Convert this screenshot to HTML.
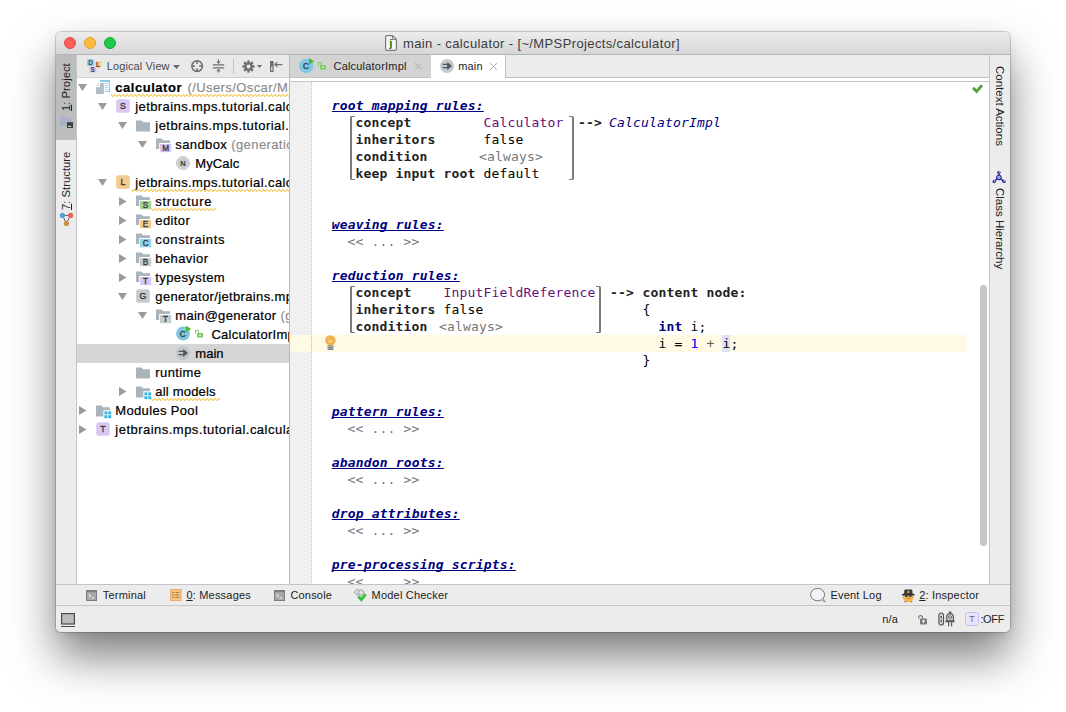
<!DOCTYPE html>
<html>
<head>
<meta charset="utf-8">
<title>main - calculator - [~/MPSProjects/calculator]</title>
<style>
html,body{margin:0;padding:0;}
body{width:1066px;height:712px;background:#fff;position:relative;overflow:hidden;font-family:"Liberation Sans",sans-serif;color:#1a1a1a;}
.abs{position:absolute;}
svg{display:block;overflow:visible;}
#win{position:absolute;left:56px;top:32px;width:954px;height:600px;border-radius:5px;background:#ececec;
 box-shadow:0 0 0 1px rgba(0,0,0,0.17),0 25px 45px rgba(0,0,0,0.5),0 3px 10px rgba(0,0,0,0.08);}
#clip{position:absolute;left:0;top:0;width:954px;height:600px;border-radius:5px;overflow:hidden;}
#title{position:absolute;left:0;top:0;width:954px;height:22px;background:linear-gradient(#ececec,#d6d6d6);border-bottom:1px solid #b5b5b5;box-sizing:content-box;}
.tl{position:absolute;top:5px;width:12px;height:12px;border-radius:50%;box-sizing:border-box;}
#ttext{position:absolute;left:347px;top:4px;font-size:13px;letter-spacing:0.375px;line-height:15px;color:#3c3c3c;white-space:nowrap;}
/* side strips */
#lstrip{position:absolute;left:0;top:23px;width:20px;height:529px;background:#ececec;border-right:1px solid #c4c4c4;}
#lactive{position:absolute;left:0;top:0;width:20px;height:85px;background:#bdbdbd;}
#rstrip{position:absolute;left:933px;top:23px;width:21px;height:529px;background:#ececec;border-left:1px solid #c4c4c4;box-sizing:border-box;}
.vtxt{position:absolute;white-space:nowrap;color:#222;}
.vl{font-size:11.3px;letter-spacing:0;line-height:12px;transform:rotate(-90deg);transform-origin:0 0;}
.vr{font-size:11.5px;line-height:12px;transform:rotate(90deg);transform-origin:0 0;}
u{text-decoration:underline;text-underline-offset:1px;}
/* project panel */
#phead{position:absolute;left:21px;top:23px;width:212px;height:23px;background:#e9e9e9;border-bottom:1px solid #d0d0d0;box-sizing:border-box;}
#tree{position:absolute;left:21px;top:46px;width:212px;height:506px;background:#fff;overflow:hidden;}
.row{position:absolute;left:0;width:212px;height:19px;}
.row .t{position:absolute;top:1px;font-size:13px;letter-spacing:0.4px;line-height:17px;white-space:nowrap;color:#000;-webkit-text-stroke:0.22px #000;}
.row .g{color:#8a8a8a;-webkit-text-stroke:0.15px #8a8a8a;}
.row .bd{font-weight:bold;letter-spacing:0.53px;margin-right:1.5px;}
.row .n1{letter-spacing:0.29px;}
#pdiv{position:absolute;left:233px;top:23px;width:1px;height:529px;background:#b9b9b9;}
/* editor */
#tabs{position:absolute;left:234px;top:23px;width:699px;height:23px;background:#ececec;border-bottom:1px solid #c2c2c2;box-sizing:border-box;}
#tab1{position:absolute;left:0;top:0;width:141px;height:23px;background:#d3d3d3;border-bottom:1px solid #c2c2c2;box-sizing:border-box;}
#tab2{position:absolute;left:141px;top:0;width:74px;height:24px;background:#fff;border-right:1px solid #bdbdbd;}
#tabwhite{position:absolute;left:234px;top:46px;width:699px;height:3px;background:#fff;border-bottom:1px solid #c6c6c6;}
.tabt{position:absolute;top:5px;font-size:11px;letter-spacing:0.2px;line-height:13px;color:#222;white-space:nowrap;}
.x{position:absolute;top:8px;}
#editor{position:absolute;left:234px;top:50px;width:699px;height:502px;background:#fff;overflow:hidden;}
#gutter{position:absolute;left:0;top:0;width:21px;height:503px;background:#f0f0f0;}
#gline{position:absolute;left:21px;top:0;width:0;height:503px;border-right:1px dotted #bcbcbc;}
#hl{position:absolute;left:0;top:253px;width:677px;height:17px;background:#fffae3;}
#thumb{position:absolute;left:690px;top:203px;width:7px;height:261px;border-radius:3.5px;background:#c7c7c7;}
.c{position:absolute;font-family:"DejaVu Sans Mono","Liberation Mono",monospace;font-size:13px;letter-spacing:0.174px;line-height:17px;white-space:pre;color:#000;}
.h{font-weight:bold;font-style:italic;color:#000080;text-decoration:underline;text-underline-offset:1.2px;text-decoration-thickness:1.4px;text-decoration-skip-ink:none;}
.b{font-weight:bold;}
.k{color:#222;}
.kw{font-weight:bold;color:#000080;}
.p{color:#660e7a;}
.gr{color:#787878;}
.pl{color:#5e5e4e;}
.bl{color:#0000ff;}
.ci{font-style:italic;color:#000080;}
/* bottom */
#btools{position:absolute;left:0;top:552px;width:954px;height:20px;background:#ececec;border-top:1px solid #c4c4c4;box-sizing:content-box;}
#status{position:absolute;left:0;top:573px;width:954px;height:27px;background:#ececec;border-top:1px solid #c4c4c4;box-sizing:border-box;}
.bt{position:absolute;top:4px;font-size:11px;letter-spacing:0.2px;line-height:13px;color:#222;white-space:nowrap;}
</style>
</head>
<body>
<div id="win"><div id="clip">
  <div id="title">
    <div class="tl" style="left:8px;background:#fc605b;border:0.5px solid #de4b46;"></div>
    <div class="tl" style="left:28px;background:#fdbc40;border:0.5px solid #dea034;"></div>
    <div class="tl" style="left:48px;background:#1fc94c;border:0.5px solid #14ab3a;"></div>
    <svg class="abs" style="left:329px;top:2.9px" width="12" height="16" viewBox="0 0 12 16"><path d="M0.6 1.8Q0.6 0.6 1.8 0.6H7.4L11.4 4.6V14.2Q11.4 15.4 10.2 15.4H1.8Q0.6 15.4 0.6 14.2Z" fill="#fbfbfb" stroke="#787878" stroke-width="1.2"/><path d="M7.4 0.6V4.6H11.4" fill="none" stroke="#787878" stroke-width="1"/><path d="M2.4 3.4H6M2.4 5.6H5M2.4 7.8H4.4" stroke="#dcdcdc" stroke-width="0.8"/><text x="5.9" y="12.3" text-anchor="middle" font-family="Liberation Sans, sans-serif" font-size="11.5" font-weight="bold" fill="#0a7a0a">j</text></svg>
    <div id="ttext">main - calculator - [~/MPSProjects/calculator]</div>
  </div>
  <div id="lstrip">
    <div id="lactive"></div>
    <div class="vtxt vl" style="left:4.4px;top:56px"><u>1</u>: Project</div>
    <svg class="abs" style="left:4px;top:61px" width="14" height="12" viewBox="0 0 14 12"><path d="M0 0H5.4L7 2.2H12V10H0Z" fill="#a9b3c6"/><rect x="7" y="6.2" width="6" height="5.8" fill="#3c3c3c"/><rect x="8.2" y="9.8" width="3" height="1" fill="#fff"/></svg>
    <div class="vtxt vl" style="left:4.4px;top:154.5px"><u>7</u>: Structure</div>
    <svg class="abs" style="left:3px;top:157px" width="15" height="15" viewBox="0 0 15 15"><path d="M3.4 3.4H11.6L7.4 11.4Z" fill="none" stroke="#555" stroke-width="1"/><circle cx="3.4" cy="3.4" r="2.6" fill="#5b9fd8"/><circle cx="11.6" cy="3.4" r="2.6" fill="#e9605c"/><circle cx="7.4" cy="11.4" r="2.6" fill="#c98f45"/></svg>
  </div>
  <div id="rstrip">
    <div class="vtxt vr" style="left:15.6px;top:11px">Context Actions</div>
    <svg class="abs" style="left:2.4px;top:115px" width="14" height="14" viewBox="0 0 14 14"><path d="M6.9 2.5V7.5M6.9 7.5L2.2 11.4M6.9 7.5L12 11.4" stroke="#2a2a9c" stroke-width="1.5"/><circle cx="6.9" cy="2.5" r="1.7" fill="#2a2a9c"/><circle cx="7.2" cy="2.1" r="0.8" fill="#c4d4f0"/><circle cx="2.2" cy="11.4" r="1.7" fill="#2a2a9c"/><circle cx="2.5" cy="11" r="0.8" fill="#c4d4f0"/><circle cx="12" cy="11.4" r="1.7" fill="#2a2a9c"/><circle cx="12.3" cy="11" r="0.8" fill="#c4d4f0"/><circle cx="6.9" cy="7.5" r="2.8" fill="#2a2a9c"/><circle cx="6.9" cy="7.3" r="1.6" fill="#b4cce8"/><circle cx="6.9" cy="7.3" r="0.6" fill="#3a4ab0"/></svg>
    <div class="vtxt vr" style="left:15.6px;top:133px">Class Hierarchy</div>
  </div>
  <div id="phead">
    <svg class="abs" style="left:10px;top:4px" width="15" height="15" viewBox="0 0 15 15">
      <rect x="0" y="0.2" width="7" height="7" fill="#8fd3ec"/><rect x="8.2" y="2.3" width="5.8" height="6.5" fill="#f5ca8e"/><rect x="2.2" y="7.7" width="7" height="6" fill="#d8c8f6"/>
      <text x="3.5" y="6" text-anchor="middle" font-family="Liberation Sans, sans-serif" font-size="6.5" font-weight="bold" fill="#3b4a55">D</text>
      <text x="11.1" y="8" text-anchor="middle" font-family="Liberation Sans, sans-serif" font-size="6.5" font-weight="bold" fill="#3b3b3b">L</text>
      <text x="5.7" y="13.2" text-anchor="middle" font-family="Liberation Sans, sans-serif" font-size="6.5" font-weight="bold" fill="#3b3b3b">S</text>
    </svg>
    <div class="abs" style="left:29.7px;top:5px;font-size:11px;letter-spacing:0.12px;line-height:13px;color:#4a4a4a;white-space:nowrap">Logical View</div>
    <svg class="abs" style="left:96.4px;top:9.7px" width="7" height="4" viewBox="0 0 7 4"><path d="M0 0H7L3.5 4Z" fill="#6a6a6a"/></svg>
    <svg class="abs" style="left:113px;top:4px" width="14" height="14" viewBox="0 0 14 14"><circle cx="7.1" cy="7.1" r="5.3" fill="none" stroke="#6e6e6e" stroke-width="1.5"/><path d="M7.1 1.8V5M7.1 9.2V12.4M1.8 7.1H5M9.2 7.1H12.4" stroke="#6e6e6e" stroke-width="1.5"/></svg>
    <svg class="abs" style="left:135px;top:4px" width="13" height="14" viewBox="0 0 13 14"><path d="M0.8 5.9H12.2M0.8 8.9H12.2" stroke="#6e6e6e" stroke-width="1.1"/><path d="M6.5 0.2V4.6M6.5 13.6V10.2" stroke="#6e6e6e" stroke-width="1"/><path d="M4.4 2.6L6.5 5L8.6 2.6ZM4.4 12.2L6.5 9.8L8.6 12.2Z" fill="#6e6e6e"/></svg>
    <div class="abs" style="left:156px;top:4px;width:1px;height:15px;background:#c2c2c2"></div>
    <svg class="abs" style="left:164.8px;top:5px" width="13" height="13" viewBox="-6.5 -6.5 13 13"><g fill="#6e6e6e"><circle r="4.3"/><rect x="-1.2" y="-6.1" width="2.4" height="12.2"/><rect x="-1.2" y="-6.1" width="2.4" height="12.2" transform="rotate(45)"/><rect x="-1.2" y="-6.1" width="2.4" height="12.2" transform="rotate(90)"/><rect x="-1.2" y="-6.1" width="2.4" height="12.2" transform="rotate(135)"/></g><circle r="1.9" fill="#e9e9e9"/></svg>
    <svg class="abs" style="left:179.5px;top:10px" width="5" height="3" viewBox="0 0 5 3"><path d="M0 0H5L2.5 3Z" fill="#6a6a6a"/></svg>
    <svg class="abs" style="left:192.6px;top:6px" width="13" height="11" viewBox="0 0 13 11"><rect x="0.6" y="0.6" width="2.4" height="9.8" fill="none" stroke="#6e6e6e" stroke-width="1.2"/><rect x="0.6" y="0.6" width="2.4" height="5" fill="#6e6e6e"/><path d="M5 3.6H12.4" stroke="#6e6e6e" stroke-width="1.1"/><path d="M7.4 1.2L4.8 3.6L7.4 6" fill="none" stroke="#6e6e6e" stroke-width="1.1"/></svg>
  </div>
  <div id="tree">
<div class="row" style="top:0px"><svg class="abs" style="left:0.9px;top:6.4px" width="9" height="7" viewBox="0 0 9 7"><path d="M0 0H9L4.5 7Z" fill="#9b9b9b"/></svg><svg class="abs" style="left:19px;top:2px" width="14" height="14" viewBox="0 0 14 14"><g fill="#7ecbe8"><rect x="3.9" y="0" width="10" height="1.9"/><rect x="12.8" y="0" width="1.1" height="11.9"/><rect x="9" y="11" width="4.9" height="0.9"/><rect x="9" y="3.1" width="2.9" height="0.8"/><rect x="9" y="5.1" width="2.9" height="0.8"/><rect x="9" y="7.1" width="2.9" height="0.8"/><rect x="9" y="9.1" width="2.9" height="0.8"/></g><path d="M4 3H7.9V13.9H0V7.3H4Z" fill="#b3bcc7"/><path d="M0.2 5.6L2.9 3V5.6Z" fill="#c6ccd3"/></svg><div class="t" style="left:38.3px"><span class="bd">calculator</span><span class="g"> (/Users/Oscar/MPSProjects</span></div><svg class="abs" style="left:34px;top:16.3px;overflow:hidden" width="180" height="3" viewBox="0 0 180 3"><polyline points="0,0.4 2,2.6 4,0.4 6,2.6 8,0.4 10,2.6 12,0.4 14,2.6 16,0.4 18,2.6 20,0.4 22,2.6 24,0.4 26,2.6 28,0.4 30,2.6 32,0.4 34,2.6 36,0.4 38,2.6 40,0.4 42,2.6 44,0.4 46,2.6 48,0.4 50,2.6 52,0.4 54,2.6 56,0.4 58,2.6 60,0.4 62,2.6 64,0.4 66,2.6 68,0.4 70,2.6 72,0.4 74,2.6 76,0.4 78,2.6 80,0.4 82,2.6 84,0.4 86,2.6 88,0.4 90,2.6 92,0.4 94,2.6 96,0.4 98,2.6 100,0.4 102,2.6 104,0.4 106,2.6 108,0.4 110,2.6 112,0.4 114,2.6 116,0.4 118,2.6 120,0.4 122,2.6 124,0.4 126,2.6 128,0.4 130,2.6 132,0.4 134,2.6 136,0.4 138,2.6 140,0.4 142,2.6 144,0.4 146,2.6 148,0.4 150,2.6 152,0.4 154,2.6 156,0.4 158,2.6 160,0.4 162,2.6 164,0.4 166,2.6 168,0.4 170,2.6 172,0.4 174,2.6 176,0.4 178,2.6 180,0.4 182,2.6" fill="none" stroke="#f2ae00" stroke-width="0.95"/></svg></div>
<div class="row" style="top:19px"><svg class="abs" style="left:20.9px;top:6.4px" width="9" height="7" viewBox="0 0 9 7"><path d="M0 0H9L4.5 7Z" fill="#9b9b9b"/></svg><svg class="abs" style="left:39.3px;top:2.4px" width="14" height="14" viewBox="0 0 14 14"><rect x="0.2" y="0.2" width="13.6" height="13.6" rx="2.6" fill="#d8c8f6"/><text x="7" y="10" text-anchor="middle" font-family="Liberation Sans, sans-serif" font-size="8.8" stroke="#3b3b3b" stroke-width="0.35" fill="#3b3b3b">S</text></svg><div class="t" style="left:58.3px">jetbrains.mps.tutorial.calculator.sandbox</div></div>
<div class="row" style="top:38px"><svg class="abs" style="left:40.9px;top:6.4px" width="9" height="7" viewBox="0 0 9 7"><path d="M0 0H9L4.5 7Z" fill="#9b9b9b"/></svg><svg class="abs" style="left:59.1px;top:3.6px" width="14" height="12" viewBox="0 0 14 12"><path d="M0 0.4H5.6L7 2.2H14V11.4H0Z" fill="#aab4bd"/></svg><div class="t" style="left:78.3px;letter-spacing:0.45px">jetbrains.mps.tutorial.calculator</div></div>
<div class="row" style="top:57px"><svg class="abs" style="left:60.9px;top:6.4px" width="9" height="7" viewBox="0 0 9 7"><path d="M0 0H9L4.5 7Z" fill="#9b9b9b"/></svg><svg class="abs" style="left:79px;top:3px" width="16" height="15" viewBox="0 0 16 15"><path d="M0 0.4H5.6L7 2.2H14V5H3.2V11H0Z" fill="#aab4bd"/><rect x="4" y="6" width="11.2" height="8.2" fill="#d8c8f6"/><text x="9.6" y="13.2" text-anchor="middle" font-family="Liberation Sans, sans-serif" font-size="8.2" stroke="#3b3b3b" stroke-width="0.35" fill="#3b3b3b">M</text></svg><div class="t" style="left:98.3px">sandbox<span class="g"> (generation required)</span></div></div>
<div class="row" style="top:76px"><svg class="abs" style="left:99.2px;top:2.4px" width="14" height="14" viewBox="0 0 14 14"><circle cx="7" cy="7" r="6.5" fill="#d9dde0" stroke="#b9c0c6" stroke-width="0.9"/><circle cx="7" cy="7" r="4.9" fill="#c6cbd0"/><text x="7" y="9.8" text-anchor="middle" font-family="Liberation Sans, sans-serif" font-size="7.5" font-weight="bold" fill="#3b3b3b">N</text></svg><div class="t" style="left:118.3px;letter-spacing:0.12px">MyCalc</div></div>
<div class="row" style="top:95px"><svg class="abs" style="left:20.9px;top:6.4px" width="9" height="7" viewBox="0 0 9 7"><path d="M0 0H9L4.5 7Z" fill="#9b9b9b"/></svg><svg class="abs" style="left:39.3px;top:2.4px" width="14" height="14" viewBox="0 0 14 14"><rect x="0.2" y="0.2" width="13.6" height="13.6" rx="2.6" fill="#f5ca8e"/><text x="7" y="10" text-anchor="middle" font-family="Liberation Sans, sans-serif" font-size="8.8" stroke="#3b3b3b" stroke-width="0.35" fill="#3b3b3b">L</text></svg><div class="t" style="left:58.3px">jetbrains.mps.tutorial.calculator</div><svg class="abs" style="left:54px;top:16.3px;overflow:hidden" width="160" height="3" viewBox="0 0 160 3"><polyline points="0,0.4 2,2.6 4,0.4 6,2.6 8,0.4 10,2.6 12,0.4 14,2.6 16,0.4 18,2.6 20,0.4 22,2.6 24,0.4 26,2.6 28,0.4 30,2.6 32,0.4 34,2.6 36,0.4 38,2.6 40,0.4 42,2.6 44,0.4 46,2.6 48,0.4 50,2.6 52,0.4 54,2.6 56,0.4 58,2.6 60,0.4 62,2.6 64,0.4 66,2.6 68,0.4 70,2.6 72,0.4 74,2.6 76,0.4 78,2.6 80,0.4 82,2.6 84,0.4 86,2.6 88,0.4 90,2.6 92,0.4 94,2.6 96,0.4 98,2.6 100,0.4 102,2.6 104,0.4 106,2.6 108,0.4 110,2.6 112,0.4 114,2.6 116,0.4 118,2.6 120,0.4 122,2.6 124,0.4 126,2.6 128,0.4 130,2.6 132,0.4 134,2.6 136,0.4 138,2.6 140,0.4 142,2.6 144,0.4 146,2.6 148,0.4 150,2.6 152,0.4 154,2.6 156,0.4 158,2.6 160,0.4 162,2.6" fill="none" stroke="#f2ae00" stroke-width="0.95"/></svg></div>
<div class="row" style="top:114px"><svg class="abs" style="left:41.9px;top:5px" width="8" height="9" viewBox="0 0 8 9"><path d="M0 0L7.5 4.5L0 9Z" fill="#9b9b9b"/></svg><svg class="abs" style="left:59.3px;top:3px" width="16" height="15" viewBox="0 0 16 15"><path d="M0 0.4H5.6L7 2.2H14V5H3.2V11H0Z" fill="#aab4bd"/><rect x="4" y="6" width="11.2" height="8.2" fill="#a3d397"/><text x="9.6" y="13.2" text-anchor="middle" font-family="Liberation Sans, sans-serif" font-size="8.2" stroke="#3b3b3b" stroke-width="0.35" fill="#3b3b3b">S</text></svg><div class="t" style="left:78.3px;letter-spacing:0.7px">structure</div><svg class="abs" style="left:74px;top:16.3px;overflow:hidden" width="65" height="3" viewBox="0 0 65 3"><polyline points="0,0.4 2,2.6 4,0.4 6,2.6 8,0.4 10,2.6 12,0.4 14,2.6 16,0.4 18,2.6 20,0.4 22,2.6 24,0.4 26,2.6 28,0.4 30,2.6 32,0.4 34,2.6 36,0.4 38,2.6 40,0.4 42,2.6 44,0.4 46,2.6 48,0.4 50,2.6 52,0.4 54,2.6 56,0.4 58,2.6 60,0.4 62,2.6 64,0.4 66,2.6" fill="none" stroke="#f2ae00" stroke-width="0.95"/></svg></div>
<div class="row" style="top:133px"><svg class="abs" style="left:41.9px;top:5px" width="8" height="9" viewBox="0 0 8 9"><path d="M0 0L7.5 4.5L0 9Z" fill="#9b9b9b"/></svg><svg class="abs" style="left:59.3px;top:3px" width="16" height="15" viewBox="0 0 16 15"><path d="M0 0.4H5.6L7 2.2H14V5H3.2V11H0Z" fill="#aab4bd"/><rect x="4" y="6" width="11.2" height="8.2" fill="#f5ca8e"/><text x="9.6" y="13.2" text-anchor="middle" font-family="Liberation Sans, sans-serif" font-size="8.2" stroke="#3b3b3b" stroke-width="0.35" fill="#3b3b3b">E</text></svg><div class="t" style="left:78.3px">editor</div></div>
<div class="row" style="top:152px"><svg class="abs" style="left:41.9px;top:5px" width="8" height="9" viewBox="0 0 8 9"><path d="M0 0L7.5 4.5L0 9Z" fill="#9b9b9b"/></svg><svg class="abs" style="left:59.3px;top:3px" width="16" height="15" viewBox="0 0 16 15"><path d="M0 0.4H5.6L7 2.2H14V5H3.2V11H0Z" fill="#aab4bd"/><rect x="4" y="6" width="11.2" height="8.2" fill="#8ed3ec"/><text x="9.6" y="13.2" text-anchor="middle" font-family="Liberation Sans, sans-serif" font-size="8.2" stroke="#3b3b3b" stroke-width="0.35" fill="#3b3b3b">C</text></svg><div class="t" style="left:78.3px;letter-spacing:0.63px">constraints</div></div>
<div class="row" style="top:171px"><svg class="abs" style="left:41.9px;top:5px" width="8" height="9" viewBox="0 0 8 9"><path d="M0 0L7.5 4.5L0 9Z" fill="#9b9b9b"/></svg><svg class="abs" style="left:59.3px;top:3px" width="16" height="15" viewBox="0 0 16 15"><path d="M0 0.4H5.6L7 2.2H14V5H3.2V11H0Z" fill="#aab4bd"/><rect x="4" y="6" width="11.2" height="8.2" fill="#c5cbd1"/><text x="9.6" y="13.2" text-anchor="middle" font-family="Liberation Sans, sans-serif" font-size="8.2" stroke="#3b3b3b" stroke-width="0.35" fill="#3b3b3b">B</text></svg><div class="t" style="left:78.3px">behavior</div></div>
<div class="row" style="top:190px"><svg class="abs" style="left:41.9px;top:5px" width="8" height="9" viewBox="0 0 8 9"><path d="M0 0L7.5 4.5L0 9Z" fill="#9b9b9b"/></svg><svg class="abs" style="left:59.3px;top:3px" width="16" height="15" viewBox="0 0 16 15"><path d="M0 0.4H5.6L7 2.2H14V5H3.2V11H0Z" fill="#aab4bd"/><rect x="4" y="6" width="11.2" height="8.2" fill="#d8c8f6"/><text x="9.6" y="13.2" text-anchor="middle" font-family="Liberation Sans, sans-serif" font-size="8.2" stroke="#3b3b3b" stroke-width="0.35" fill="#3b3b3b">T</text></svg><div class="t" style="left:78.3px">typesystem</div></div>
<div class="row" style="top:209px"><svg class="abs" style="left:40.9px;top:6.4px" width="9" height="7" viewBox="0 0 9 7"><path d="M0 0H9L4.5 7Z" fill="#9b9b9b"/></svg><svg class="abs" style="left:59.3px;top:2.4px" width="14" height="14" viewBox="0 0 14 14"><rect x="0.2" y="0.2" width="13.6" height="13.6" rx="2.6" fill="#c5cbd1"/><text x="7" y="10" text-anchor="middle" font-family="Liberation Sans, sans-serif" font-size="8.8" stroke="#3b3b3b" stroke-width="0.35" fill="#3b3b3b">G</text></svg><div class="t" style="left:78.3px;letter-spacing:0.36px">generator/jetbrains.mps.tutorial</div></div>
<div class="row" style="top:228px"><svg class="abs" style="left:60.9px;top:6.4px" width="9" height="7" viewBox="0 0 9 7"><path d="M0 0H9L4.5 7Z" fill="#9b9b9b"/></svg><svg class="abs" style="left:79px;top:3px" width="16" height="15" viewBox="0 0 16 15"><path d="M0 0.4H5.6L7 2.2H14V5H3.2V11H0Z" fill="#aab4bd"/><rect x="4" y="6" width="11.2" height="8.2" fill="#c5cbd1"/><text x="9.6" y="13.2" text-anchor="middle" font-family="Liberation Sans, sans-serif" font-size="8.2" stroke="#3b3b3b" stroke-width="0.35" fill="#3b3b3b">T</text></svg><div class="t" style="left:98.3px"><span class="n1">main@generator</span><span class="g"> (generation required)</span></div></div>
<div class="row" style="top:247px"><svg class="abs" style="left:99px;top:0.3px" width="16" height="16" viewBox="0 0 16 16"><circle cx="7" cy="8.6" r="7" fill="#7fc8e3"/><text x="6.8" y="11.5" text-anchor="middle" font-family="Liberation Sans, sans-serif" font-size="8.2" stroke="#3a4652" stroke-width="0.4" fill="#3a4652">C</text><path d="M9.8 0.6L15.2 3.9L9.8 7.4Z" fill="#4fb834"/></svg><svg class="abs" style="left:118px;top:4.9px" width="9" height="8" viewBox="0 0 9 8"><path d="M0.5 3.6V0.5H3.4V3" fill="none" stroke="#7ecb6a" stroke-width="1"/><rect x="2" y="3" width="6" height="4.6" fill="#7ecb6a"/><rect x="4.2" y="4.6" width="1.8" height="1.4" fill="#d8f0d0"/></svg><div class="t" style="left:134.4px;letter-spacing:0.26px">CalculatorImpl</div></div>
<div class="row" style="top:266px;background:#d5d5d5"><svg class="abs" style="left:99px;top:2.4px" width="14" height="14" viewBox="0 0 14 14"><circle cx="7" cy="7" r="7" fill="#bfc6cd"/><path d="M2.6 5.4H8M2.6 8.6H8" stroke="#555" stroke-width="1.2"/><path d="M7.2 3L12 7L7.2 11Z" fill="#555"/></svg><div class="t" style="left:118.3px;letter-spacing:0.03px">main</div></div>
<div class="row" style="top:285px"><svg class="abs" style="left:59.1px;top:3.6px" width="14" height="12" viewBox="0 0 14 12"><path d="M0 0.4H5.6L7 2.2H14V11.4H0Z" fill="#aab4bd"/></svg><div class="t" style="left:78.3px">runtime</div></div>
<div class="row" style="top:304px"><svg class="abs" style="left:41.9px;top:5px" width="8" height="9" viewBox="0 0 8 9"><path d="M0 0L7.5 4.5L0 9Z" fill="#9b9b9b"/></svg><svg class="abs" style="left:59.1px;top:3.6px" width="16" height="15" viewBox="0 0 16 15"><path d="M0 0.4H5.6L7 2.2H14V5.2H7.4V11.4H0Z" fill="#aab4bd"/><rect x="8.4" y="6.4" width="3" height="3" fill="#38b6e0"/><rect x="12.2" y="6.4" width="3" height="3" fill="#38b6e0"/><rect x="8.4" y="10.2" width="3" height="3" fill="#38b6e0"/><rect x="12.2" y="10.2" width="3" height="3" fill="#38b6e0"/></svg><div class="t" style="left:78.3px;letter-spacing:0.2px">all models</div><svg class="abs" style="left:74px;top:16.3px;overflow:hidden" width="69" height="3" viewBox="0 0 69 3"><polyline points="0,0.4 2,2.6 4,0.4 6,2.6 8,0.4 10,2.6 12,0.4 14,2.6 16,0.4 18,2.6 20,0.4 22,2.6 24,0.4 26,2.6 28,0.4 30,2.6 32,0.4 34,2.6 36,0.4 38,2.6 40,0.4 42,2.6 44,0.4 46,2.6 48,0.4 50,2.6 52,0.4 54,2.6 56,0.4 58,2.6 60,0.4 62,2.6 64,0.4 66,2.6 68,0.4 70,2.6" fill="none" stroke="#f2ae00" stroke-width="0.95"/></svg></div>
<div class="row" style="top:323px"><svg class="abs" style="left:1.9px;top:5px" width="8" height="9" viewBox="0 0 8 9"><path d="M0 0L7.5 4.5L0 9Z" fill="#9b9b9b"/></svg><svg class="abs" style="left:19.1px;top:3.6px" width="16" height="15" viewBox="0 0 16 15"><path d="M0 0.4H5.6L7 2.2H14V5.2H7.4V11.4H0Z" fill="#aab4bd"/><rect x="8.4" y="6.4" width="3" height="3" fill="#38b6e0"/><rect x="12.2" y="6.4" width="3" height="3" fill="#38b6e0"/><rect x="8.4" y="10.2" width="3" height="3" fill="#38b6e0"/><rect x="12.2" y="10.2" width="3" height="3" fill="#38b6e0"/></svg><div class="t" style="left:38.3px;letter-spacing:0.34px">Modules Pool</div></div>
<div class="row" style="top:342px"><svg class="abs" style="left:1.9px;top:5px" width="8" height="9" viewBox="0 0 8 9"><path d="M0 0L7.5 4.5L0 9Z" fill="#9b9b9b"/></svg><svg class="abs" style="left:19.3px;top:2.4px" width="14" height="14" viewBox="0 0 14 14"><rect x="0.2" y="0.2" width="13.6" height="13.6" rx="2.6" fill="#d8c8f6"/><text x="7" y="10" text-anchor="middle" font-family="Liberation Sans, sans-serif" font-size="8.8" stroke="#3b3b3b" stroke-width="0.35" fill="#3b3b3b">T</text></svg><div class="t" style="left:38.3px;letter-spacing:0.48px">jetbrains.mps.tutorial.calculator.tests</div></div>
  </div>
  <div id="pdiv"></div>
  <div id="tabs">
    <div id="tab1"><svg class="abs" style="left:8.9px;top:3px" width="16" height="16" viewBox="0 0 16 16"><circle cx="7.2" cy="8" r="7.2" fill="#7fc8e3"/><text x="7" y="10.9" text-anchor="middle" font-family="Liberation Sans, sans-serif" font-size="8.2" stroke="#3a4652" stroke-width="0.4" fill="#3a4652">C</text><path d="M10 0L15.2 3.3L10 6.8Z" fill="#4fb834"/></svg><svg class="abs" style="left:28px;top:7px" width="9" height="8" viewBox="0 0 9 8"><path d="M0.5 3.6V0.5H3.4V3" fill="none" stroke="#7ecb6a" stroke-width="1"/><rect x="2" y="3" width="6" height="4.6" fill="#7ecb6a"/><rect x="4.2" y="4.6" width="1.8" height="1.4" fill="#d8f0d0"/></svg><div class="tabt" style="left:43.5px">CalculatorImpl</div><svg class="abs" style="left:125px;top:8.2px" width="7" height="7" viewBox="0 0 7 7"><path d="M0.2 0.2L6.8 6.8M6.8 0.2L0.2 6.8" stroke="#a3aab2" stroke-width="1"/></svg></div>
    <div id="tab2"><svg class="abs" style="left:9px;top:4px" width="14" height="14" viewBox="0 0 14 14"><circle cx="7" cy="7" r="7" fill="#c3cad1"/><path d="M2.6 5.4H8M2.6 8.6H8" stroke="#555" stroke-width="1.2"/><path d="M7.2 3L12 7L7.2 11Z" fill="#555"/></svg><div class="tabt" style="left:27.2px">main</div><svg class="abs" style="left:59px;top:8.2px" width="7" height="7" viewBox="0 0 7 7"><path d="M0.2 0.2L6.8 6.8M6.8 0.2L0.2 6.8" stroke="#a3aab2" stroke-width="1"/></svg></div>
  </div>
  <div id="tabwhite"></div>
  <div id="editor">
    <div id="gutter"></div>
    <div id="hl"><div class="abs" style="left:22px;top:6px;width:655px;height:1px;background:repeating-linear-gradient(90deg,#f1e9ec 0 1px,transparent 1px 5px)"></div><div class="abs" style="left:24px;top:11px;width:653px;height:1px;background:repeating-linear-gradient(90deg,#f1e9ec 0 1px,transparent 1px 4px)"></div></div>
    <div id="gline"></div>
<div class="c h" style="left:41.80000000000001px;top:15px">root mapping rules:</div>
<div class="abs" style="left:60px;top:34px;width:5px;height:64.4px;border:1.5px solid #7c7c7c;border-left-width:2px;border-right:none;border-radius:1.5px 0 0 1.5px;box-sizing:border-box"></div>
<div class="c b k" style="left:65.5px;top:32px">concept</div>
<div class="c p" style="left:193.5px;top:32px">Calculator</div>
<div class="c b k" style="left:288px;top:32px">--&gt;</div>
<div class="c ci" style="left:319px;top:32px">CalculatorImpl</div>
<div class="abs" style="left:278.6px;top:34px;width:5px;height:64.4px;border:1.5px solid #7c7c7c;border-right-width:2px;border-left:none;border-radius:0 1.5px 1.5px 0;box-sizing:border-box"></div>
<div class="c b k" style="left:65.5px;top:49px">inheritors</div>
<div class="c " style="left:193.5px;top:49px">false</div>
<div class="c b k" style="left:65.5px;top:66px">condition</div>
<div class="c gr" style="left:189px;top:66px">&lt;always&gt;</div>
<div class="c b k" style="left:65.5px;top:83px">keep input root</div>
<div class="c " style="left:193.5px;top:83px">default</div>
<div class="c h" style="left:41.80000000000001px;top:134px">weaving rules:</div>
<div class="c gr" style="left:57.5px;top:151px">&lt;&lt; ... &gt;&gt;</div>
<div class="c h" style="left:41.80000000000001px;top:185px">reduction rules:</div>
<div class="abs" style="left:59.60000000000002px;top:204px;width:5px;height:47.4px;border:1.5px solid #7c7c7c;border-left-width:2px;border-right:none;border-radius:1.5px 0 0 1.5px;box-sizing:border-box"></div>
<div class="c b k" style="left:65.5px;top:202px">concept</div>
<div class="c p" style="left:153.5px;top:202px">InputFieldReference</div>
<div class="abs" style="left:306px;top:204px;width:5px;height:47.4px;border:1.5px solid #7c7c7c;border-right-width:2px;border-left:none;border-radius:0 1.5px 1.5px 0;box-sizing:border-box"></div>
<div class="c b k" style="left:320px;top:202px">--&gt;</div>
<div class="c b k" style="left:352.5px;top:202px">content node:</div>
<div class="c b k" style="left:65.5px;top:219px">inheritors</div>
<div class="c " style="left:153.5px;top:219px">false</div>
<div class="c " style="left:352.5px;top:219px">{</div>
<div class="c b k" style="left:65.5px;top:236px">condition</div>
<div class="c gr" style="left:149px;top:236px">&lt;always&gt;</div>
<div class="c kw" style="left:368.5px;top:236px">int</div>
<div class="c " style="left:400.5px;top:236px">i;</div>
<div class="abs" style="left:431.5px;top:253px;width:8.5px;height:17px;background:#e2e2f6"></div>
<div class="c " style="left:368.5px;top:253px">i = </div>
<div class="c bl" style="left:400.5px;top:253px">1</div>
<div class="c pl" style="left:416.5px;top:253px">+</div>
<div class="c " style="left:432.5px;top:253px">i;</div>
<div class="c " style="left:352.5px;top:270px">}</div>
<div class="c h" style="left:41.80000000000001px;top:321px">pattern rules:</div>
<div class="c gr" style="left:57.5px;top:338px">&lt;&lt; ... &gt;&gt;</div>
<div class="c h" style="left:41.80000000000001px;top:372px">abandon roots:</div>
<div class="c gr" style="left:57.5px;top:389px">&lt;&lt; ... &gt;&gt;</div>
<div class="c h" style="left:41.80000000000001px;top:423px">drop attributes:</div>
<div class="c gr" style="left:57.5px;top:440px">&lt;&lt; ... &gt;&gt;</div>
<div class="c h" style="left:41.80000000000001px;top:474px">pre-processing scripts:</div>
<div class="c gr" style="left:57.5px;top:491px">&lt;&lt; ... &gt;&gt;</div>
    <div id="thumb"></div>
    <svg class="abs" style="left:34.6px;top:252.6px" width="11" height="16" viewBox="0 0 11 16"><circle cx="5.4" cy="5.4" r="5.2" fill="#f0b150"/><path d="M3.2 4.4L4.6 7.4L5.4 5.6L6.2 7.4L7.6 4.4" fill="none" stroke="#fbe3b4" stroke-width="0.8"/><rect x="2.6" y="10" width="5.8" height="5" rx="0.8" fill="#7a7d82"/><path d="M2.6 11.6H8.4M2.6 13.3H8.4" stroke="#c8c8c8" stroke-width="0.6"/><rect x="3" y="9.4" width="5" height="1.2" fill="#f0b150"/></svg>
    <svg class="abs" style="left:680px;top:0px" width="16" height="14" viewBox="0 0 16 14"><path d="M3 5.9L6.6 9.4L12 3.3" fill="none" stroke="#55a33e" stroke-width="2.9"/></svg>
  </div>
  <div id="btools">
<svg class="abs" style="left:30px;top:5.2px" width="11" height="11" viewBox="0 0 11 11"><rect x="0" y="0" width="11" height="11" fill="#7e7e7e"/><rect x="1" y="2.2" width="9" height="7.8" fill="#a8a8a8"/><path d="M2.6 4L4.6 5.6L2.6 7.2" fill="none" stroke="#fff" stroke-width="0.9"/><path d="M5.4 8H8" stroke="#fff" stroke-width="0.9"/></svg><div class="bt" style="left:46.8px">Terminal</div>
<svg class="abs" style="left:113.5px;top:4.2px" width="12" height="12" viewBox="0 0 12 12"><rect x="0" y="0" width="11.4" height="12" fill="#f5c587"/><rect x="0.4" y="0.4" width="10.6" height="11.2" fill="none" stroke="#e2ae6a" stroke-width="0.8"/><path d="M2 3.6H4.4M5.4 3.6H9.4M2 6H4.4M5.4 6H9.4M2 8.4H4.4M5.4 8.4H9.4" stroke="#a87a3c" stroke-width="1"/></svg><div class="bt" style="left:130.4px"><u>0</u>: Messages</div>
<svg class="abs" style="left:217.8px;top:5.2px" width="11" height="11" viewBox="0 0 11 11"><rect x="0" y="0" width="11" height="11" fill="#7e7e7e"/><rect x="1" y="2.2" width="9" height="7.8" fill="#a8a8a8"/><path d="M2.6 4L4.6 5.6L2.6 7.2" fill="none" stroke="#fff" stroke-width="0.9"/><path d="M5.4 8H8" stroke="#fff" stroke-width="0.9"/></svg><div class="bt" style="left:234.4px">Console</div>
<svg class="abs" style="left:298px;top:3px" width="14" height="14" viewBox="0 0 14 14"><path d="M3.4 1L6.6 4.2L3.4 7.4L0.2 4.2Z" fill="#dde4ec" stroke="#8c8c8c" stroke-width="0.9"/><path d="M7.1 1.3L10.3 4.5L7.1 7.7L3.9 4.5Z" fill="#dde4ec" stroke="#8c8c8c" stroke-width="0.9"/><path d="M4.3 8.3L7.4 11.7L11.6 6.2" fill="none" stroke="#3cc03c" stroke-width="2.9"/></svg><div class="bt" style="left:315.6px">Model Checker</div>
<svg class="abs" style="left:753.8px;top:3.4px" width="17" height="15" viewBox="0 0 17 15"><ellipse cx="7.6" cy="6.6" rx="7" ry="6.2" fill="#f4f4f4" stroke="#777" stroke-width="1"/><path d="M11.4 11.4C12.4 13 13.8 13.6 15.4 13.6C14 13 13.4 11.6 13.4 10.2" fill="#f4f4f4" stroke="#777" stroke-width="0.9"/></svg><div class="bt" style="left:774.4px">Event Log</div>
<svg class="abs" style="left:846.2px;top:3.5px" width="13" height="14" viewBox="0 0 13 14"><path d="M1 6.2H11.6Q12.5 8.6 11 10.8Q9 13.5 6.3 13.5Q3.6 13.5 1.6 10.8Q0.1 8.6 1 6.2Z" fill="#f5b452"/><path d="M2 12.2L4.2 12.4L3 13.6ZM10.6 12.2L8.4 12.4L9.6 13.6Z" fill="#3a4252"/><path d="M3.4 9.5Q6.3 8 9.2 9.5Q6.3 10.4 3.4 9.5Z" fill="#d4862a"/><ellipse cx="4.3" cy="7" rx="1.4" ry="0.9" fill="#33353a"/><ellipse cx="8.3" cy="7" rx="1.4" ry="0.9" fill="#33353a"/><path d="M2 5.6L2.3 1.6Q2.4 0.5 3.6 0.5H9Q10.2 0.5 10.3 1.6L10.6 5.6Z" fill="#3a3c40"/><rect x="0" y="4.8" width="12.6" height="1.7" rx="0.85" fill="#33353a"/><path d="M6.3 1.5L7.7 3L6.3 4.5L4.9 3Z" fill="#f0a840"/></svg><div class="bt" style="left:863.2px"><u>2</u>: Inspector</div>
  </div>
  <div id="status">
    <svg class="abs" style="left:5px;top:6px" width="14" height="16" viewBox="0 0 14 16"><rect x="0.6" y="1.6" width="12.8" height="10.4" fill="#bdbdbd" stroke="#4a4a4a" stroke-width="1.2"/><rect x="0" y="14" width="14" height="1" fill="#4a4a4a"/></svg>
    <div class="bt" style="left:826.2px;top:7px">n/a</div>
    <svg class="abs" style="left:862px;top:9.1px" width="10" height="10" viewBox="0 0 10 10"><path d="M0.7 3.8V2.5Q0.7 0.6 2.6 0.6Q4.5 0.6 4.5 2.5V3.8" fill="none" stroke="#7a7a7a" stroke-width="1.2"/><rect x="2" y="3.6" width="7" height="6" rx="1" fill="#7a7a7a"/><rect x="4" y="5.3" width="3" height="1.1" fill="#f0f0f0"/><rect x="5" y="5.3" width="1.1" height="3" fill="#f0f0f0"/></svg>
    <svg class="abs" style="left:882.3px;top:5.1px" width="17" height="16" viewBox="0 0 17 16"><rect x="0.9" y="2" width="4.6" height="12" rx="2.3" fill="#e0e0e0" stroke="#555" stroke-width="1.2"/><rect x="2.4" y="4.8" width="1.6" height="2.6" fill="#666"/><rect x="2.4" y="8.8" width="1.6" height="2.6" fill="#666"/><rect x="10.9" y="0.5" width="2.4" height="2.4" fill="#555"/><path d="M8.8 9.8V6Q8.8 2.7 12.1 2.7Q15.4 2.7 15.4 6V9.8Z" fill="#e4e4e4" stroke="#555" stroke-width="1.2"/><circle cx="12.1" cy="6.3" r="1.7" fill="#f6f6f6" stroke="#555" stroke-width="0.8"/><circle cx="12.1" cy="6.3" r="0.7" fill="#555"/><rect x="7.4" y="9.4" width="9.2" height="1.9" rx="0.5" fill="#555"/><rect x="10" y="11.3" width="1.2" height="4" fill="#555"/><rect x="13" y="11.3" width="1.2" height="4" fill="#555"/></svg>
    <div class="abs" style="left:909px;top:5.6px;width:14px;height:14px;box-sizing:border-box;border:1px solid #cdbbf6;border-radius:2.5px;background:#e9e2fb"></div>
    <div class="abs" style="left:909px;top:8.6px;width:14px;text-align:center;font-size:9px;line-height:9px;color:#707070">T</div>
    <div class="bt" style="left:924.4px;top:7px;letter-spacing:-0.35px">:OFF</div>
  </div>
</div></div>
</body>
</html>
